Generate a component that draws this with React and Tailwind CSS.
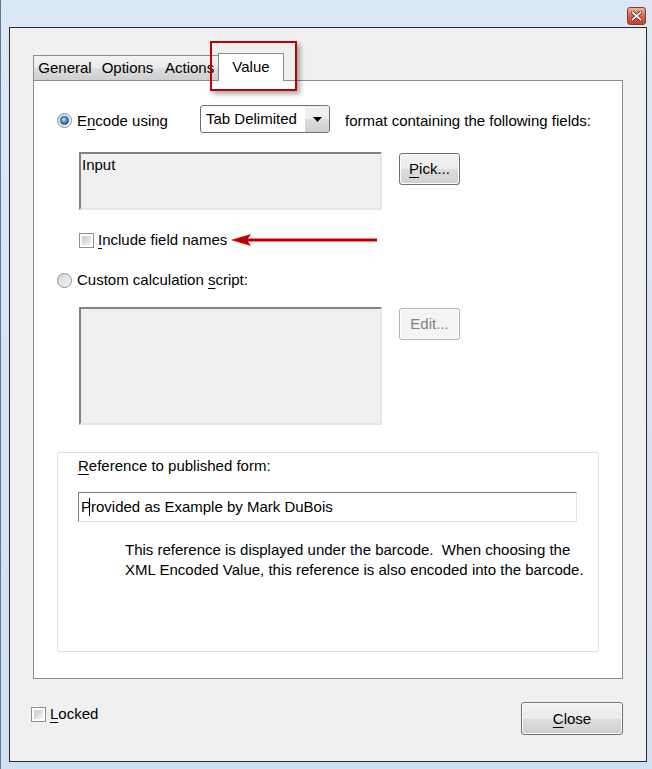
import React from 'react';

// Win7-style checkbox
function Check() {
  return (
    <div className="w-[15px] h-[15px] border border-[#8e8f8f] bg-white p-[2px] shrink-0">
      <div className="w-full h-full bg-[linear-gradient(135deg,#c4c8ce,#f4f4f4)]" />
    </div>
  );
}

function Radio({ on }) {
  return (
    <div className="w-[15px] h-[15px] rounded-full border border-[#8e8f8f] bg-[linear-gradient(135deg,#d2d4d8,#f8f8f8)] flex items-center justify-center shrink-0">
      {on && (
        <div className="w-[9px] h-[9px] rounded-full border border-[#1d4e80] bg-[radial-gradient(circle_at_40%_35%,#d4ecff_0%,#4a9ae0_40%,#0d4f94_100%)]" />
      )}
    </div>
  );
}

function Btn({ children, disabled, className }) {
  return (
    <div
      className={`flex items-center justify-center rounded-[3px] border shadow-[inset_0_0_0_1px_#fcfcfc] ${
        disabled
          ? 'border-[#adb2b5] bg-[#f4f4f4] text-[#838383]'
          : 'border-[#707070] bg-[linear-gradient(#f2f2f2_0%,#ebebeb_50%,#dddddd_51%,#cfcfcf_100%)] text-black'
      } ${className}`}
    >
      {children}
    </div>
  );
}

function U({ children }) {
  return <span className="underline underline-offset-[3px] decoration-1">{children}</span>;
}

export default function App() {
  return (
    <div className="w-[652px] h-[769px] flex flex-col bg-[linear-gradient(#dbe8f6,#cfe0f3)] border-l border-[#64768a] font-['Liberation_Sans',Arial,sans-serif] text-[15px] text-black leading-[20px] overflow-hidden">
      {/* title bar */}
      <div className="h-[27px] flex justify-end items-start pt-[7px] pr-[6px] shrink-0">
        <div className="w-[19px] h-[18px] rounded-[3px] border border-[#8a3a2c] bg-[linear-gradient(#eeb1a0,#d9664c_50%,#c3402a)] flex items-center justify-center">
          <svg width="11" height="10" viewBox="0 0 11 10">
            <path d="M1.5 1.5 L9.5 8.5 M9.5 1.5 L1.5 8.5" stroke="#4b2a24" strokeWidth="3.4" strokeLinecap="square" />
            <path d="M1.5 1.5 L9.5 8.5 M9.5 1.5 L1.5 8.5" stroke="#ffffff" strokeWidth="1.8" strokeLinecap="square" />
          </svg>
        </div>
      </div>

      {/* client area */}
      <div className="ml-[8px] mr-[5px] h-[735px] border border-[#2b2b2b] bg-[#f0f0f0] pt-[25px] pl-[23px] pr-[23px] flex flex-col relative">
        {/* tabs */}
        <div className="flex items-end h-[28px] -mb-px relative z-10">
          <div className="w-[64px] h-[25px] mb-px border-l border-t border-r border-[#898c95] bg-[linear-gradient(#f3f3f3,#ebebeb_50%,#dddddd_51%,#cfcfcf)] flex items-center justify-center">General</div>
          <div className="w-[64px] h-[25px] mb-px -ml-px border-t border-r border-[#898c95] bg-[linear-gradient(#f3f3f3,#ebebeb_50%,#dddddd_51%,#cfcfcf)] flex items-center justify-center">Options</div>
          <div className="w-[61px] h-[25px] mb-px -ml-px border-t border-r border-[#898c95] bg-[linear-gradient(#f3f3f3,#ebebeb_50%,#dddddd_51%,#cfcfcf)] flex items-center pl-[6px]">Actions</div>
          <div className="w-[66px] h-[28px] -ml-[2px] relative border-l border-t border-r border-[#898c95] bg-white flex items-start justify-center pt-[3px]">Value</div>
        </div>

        {/* red annotation box */}
        <div className="absolute left-[200px] top-[13px] w-[87px] h-[50px] border-2 border-[#c00000] shadow-[3px_3px_5px_rgba(0,0,0,0.35)] z-20" />

        {/* panel */}
        <div className="h-[599px] border border-[#898c95] bg-white flex flex-col pt-[24px] pl-[23px]">
          {/* row 1 */}
          <div className="flex items-center h-[28px]">
            <div className="w-[143px] flex items-center gap-[5px] mt-[3px]">
              <Radio on />
              <span>E<U>n</U>code using</span>
            </div>
            <div className="w-[130px] h-[28px] rounded-[3px] border border-[#707070] flex overflow-hidden shadow-[inset_0_0_0_1px_#fafafa]">
              <div className="flex-1 bg-white flex items-center pl-[4px] m-[1px] mr-0">Tab Delimited</div>
              <div className="w-[24px] bg-[linear-gradient(#f2f2f2,#ebebeb_50%,#dddddd_51%,#cfcfcf)] flex items-center justify-center">
                <svg width="9" height="5" viewBox="0 0 9 5"><path d="M0 0 H9 L4.5 5 Z" fill="#000" /></svg>
              </div>
            </div>
            <span className="ml-[15px] mt-[4px]">format containing the following fields:</span>
          </div>

          {/* row 2 */}
          <div className="flex items-start mt-[19px] pl-[22px]">
            <div className="w-[303px] h-[58px] bg-[#f0f0f0] border-2 border-t-[#828282] border-l-[#828282] border-r-[#e6e6e6] border-b-[#e6e6e6] pl-[1px] pt-[1px] leading-[20px]">Input</div>
            <Btn className="ml-[17px] mt-[1px] w-[61px] h-[32px]"><span><U>P</U>ick...</span></Btn>
          </div>

          {/* row 3 */}
          <div className="flex items-center mt-[20px] h-[20px] pl-[22px]">
            <Check />
            <span className="ml-[4px]"><U>I</U>nclude field names</span>
            <svg className="ml-[4px]" width="148" height="14" viewBox="0 0 148 14">
              <path d="M0 7 L20 1 L16 7 L20 13 Z" fill="#c00000" />
              <path d="M15 7 H146" stroke="#c00000" strokeWidth="3" />
            </svg>
          </div>

          {/* row 4 */}
          <div className="flex items-center mt-[20px] h-[20px] gap-[5px]">
            <Radio />
            <span>Custom calculation <U>s</U>cript:</span>
          </div>

          {/* row 5 */}
          <div className="flex items-start mt-[17px] pl-[22px]">
            <div className="w-[303px] h-[118px] bg-[#f0f0f0] border-2 border-t-[#828282] border-l-[#828282] border-r-[#e6e6e6] border-b-[#e6e6e6]" />
            <Btn disabled className="ml-[17px] mt-[1px] w-[61px] h-[32px]">Edit...</Btn>
          </div>

          {/* group box */}
          <div className="mt-[27px] w-[542px] h-[200px] border border-[#d5dfe5] rounded-[3px] pt-[3px] pl-[20px] flex flex-col">
            <div className="h-[20px]"><U>R</U>eference to published form:</div>
            <div className="mt-[16px] w-[499px] h-[30px] border border-t-[#7a7a7a] border-l-[#7a7a7a] border-r-[#e3e3e3] border-b-[#e3e3e3] bg-white flex items-center pl-[2px] relative">
              <span>P</span>
              <span className="w-px h-[18px] bg-black -ml-[2px] mr-[1px]" />
              <span>rovided as Example by Mark DuBois</span>
            </div>
            <div className="mt-[18px] ml-[47px] whitespace-pre leading-[20px]">
              {'This reference is displayed under the barcode.  When choosing the\nXML Encoded Value, this reference is also encoded into the barcode.'}
            </div>
          </div>
        </div>

        {/* bottom row */}
        <div className="flex items-start justify-between mt-[23px] -ml-[2px]">
          <div className="flex items-center h-[20px] mt-[2px] gap-[4px]">
            <Check />
            <span><U>L</U>ocked</span>
          </div>
          <Btn className="w-[102px] h-[33px]"><span><U>C</U>lose</span></Btn>
        </div>
      </div>
    </div>
  );
}
